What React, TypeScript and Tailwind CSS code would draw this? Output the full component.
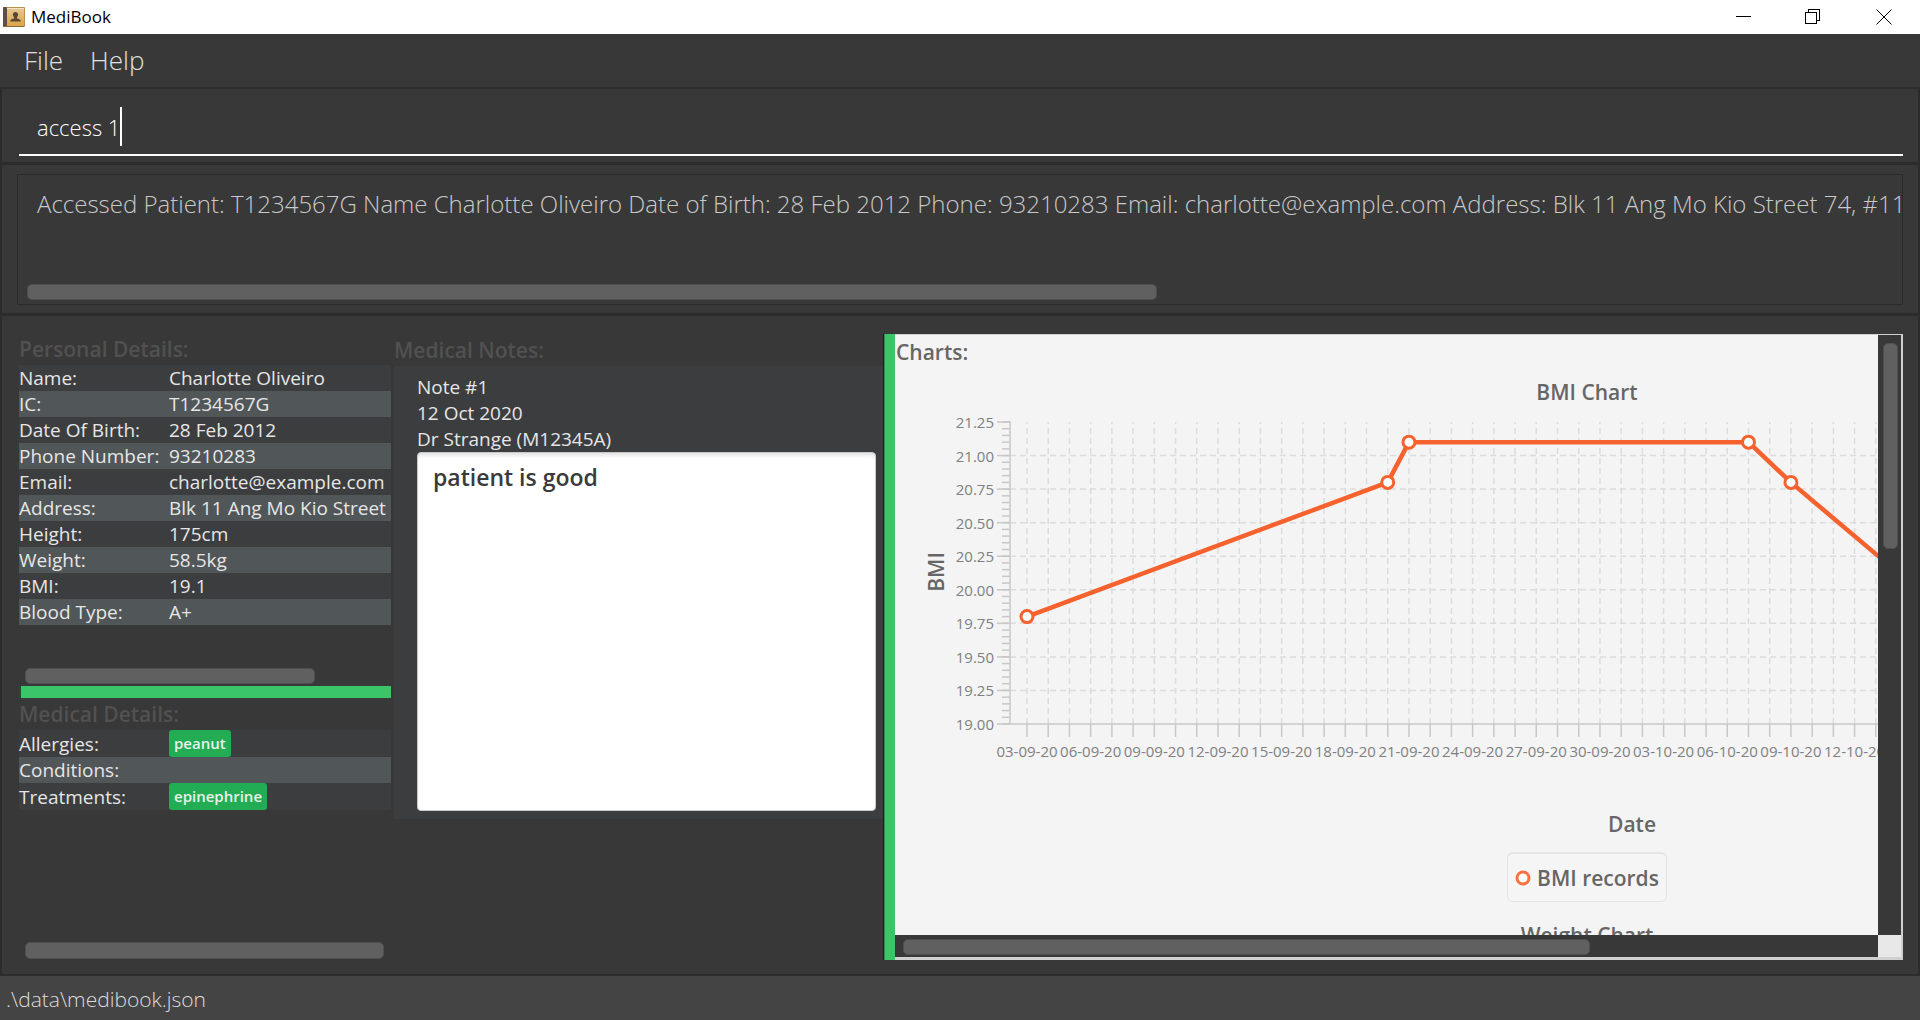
import React from "react";

const personalDetails: [string, string][] = [
  ["Name:", "Charlotte Oliveiro"],
  ["IC:", "T1234567G"],
  ["Date Of Birth:", "28 Feb 2012"],
  ["Phone Number:", "93210283"],
  ["Email:", "charlotte@example.com"],
  ["Address:", "Blk 11 Ang Mo Kio Street 74, #11-04"],
  ["Height:", "175cm"],
  ["Weight:", "58.5kg"],
  ["BMI:", "19.1"],
  ["Blood Type:", "A+"],
];

const medicalDetails: [string, string[]][] = [
  ["Allergies:", ["peanut"]],
  ["Conditions:", []],
  ["Treatments:", ["epinephrine"]],
];

const resultText =
  "Accessed Patient: T1234567G Name Charlotte Oliveiro Date of Birth: 28 Feb 2012 Phone: 93210283 Email: charlotte@example.com Address: Blk 11 Ang Mo Kio Street 74, #11-04";

/* BMI chart geometry, relative to the chart drawing */
const AXIS_X = 115;
const TOP = 21;
const BOTTOM = 323;
const FIRST_TICK = 132;
const DAY = 21.22;
const PLOT_RIGHT = 1360;

const yOf = (bmi: number) => TOP + ((21.25 - bmi) / 2.25) * (BOTTOM - TOP);
const xOf = (day: number) => FIRST_TICK + day * DAY;

const majorTicks = Array.from({ length: 10 }, (_, i) => 21.25 - i * 0.25);
const minorTicks = Array.from({ length: 46 }, (_, i) => 21.25 - i * 0.05);
const days = Array.from({ length: 58 }, (_, i) => i);
const dateLabels = [
  "03-09-20", "06-09-20", "09-09-20", "12-09-20", "15-09-20", "18-09-20", "21-09-20",
  "24-09-20", "27-09-20", "30-09-20", "03-10-20", "06-10-20", "09-10-20", "12-10-20",
];
const records: [number, number][] = [
  [0, 19.8],
  [17, 20.8],
  [18, 21.1],
  [34, 21.1],
  [36, 20.8],
  [45, 19.6],
];

function AppIcon() {
  return (
    <svg width="22" height="21" viewBox="0 0 22 21" aria-hidden="true">
      <defs>
        <linearGradient id="cover" x1="0" y1="0" x2="0" y2="1">
          <stop offset="0" stopColor="#e6c68c" />
          <stop offset="1" stopColor="#dba548" />
        </linearGradient>
      </defs>
      <rect x="0" y="0" width="22" height="20" rx="1" fill="#b98f4c" />
      <rect x="4" y="2" width="17" height="17" fill="url(#cover)" />
      <rect x="4" y="1" width="17" height="1" fill="#efe3c8" />
      <rect x="0" y="0" width="4" height="20" rx="1" fill="#5f4f4c" />
      <rect x="1" y="19" width="20" height="1" fill="#8b6d3b" />
      <path
        d="M12.500 5c1.600 0 2.600 1.100 2.600 2.600 0 1.200-.6 2.200-1.200 2.800v1.200c1.600.4 3.700.8 4 2.900H7.100c.3-2.100 2.400-2.500 4-2.900v-1.200c-.6-.6-1.200-1.600-1.200-2.800C9.900 6.100 10.900 5 12.500 5z"
        fill="#5a4834"
      />
    </svg>
  );
}

function TitleBar() {
  return (
    <header className="flex h-[34px] items-center justify-between bg-white pl-[3px] text-black">
      <div className="flex items-center gap-[6px]">
        <AppIcon />
        <h1 className="text-[17px] leading-5">MediBook</h1>
      </div>
      <div className="flex h-full">
        <button type="button" aria-label="Minimize" className="flex w-[70px] items-center justify-center">
          <svg width="16" height="16" viewBox="0 0 16 16" stroke="black" fill="none" shapeRendering="crispEdges">
            <path d="M1 7.500h15" />
          </svg>
        </button>
        <button type="button" aria-label="Restore" className="flex w-[70px] items-center justify-center">
          <svg width="16" height="16" viewBox="0 0 16 16" stroke="black" fill="none" shapeRendering="crispEdges">
            <path d="M.5 3.500h11v11H.5zM3.500 3.500v-3h11v11h-3" />
          </svg>
        </button>
        <button type="button" aria-label="Close" className="flex w-[72px] items-center justify-center">
          <svg width="16" height="16" viewBox="0 0 16 16" stroke="black" fill="none">
            <path d="M.5.500l15 15M15.500.500l-15 15" />
          </svg>
        </button>
      </div>
    </header>
  );
}

function Thumb({ className }: { className: string }) {
  return <div className={`rounded-[5px] border border-[#4f4f4f] bg-[#606060] ${className}`} />;
}

function PersonalDetails() {
  return (
    <section className="flex h-[352px] flex-col">
      <h2 className="h-[31px] text-[21px] leading-[31px] font-semibold text-[#515151]">Personal Details:</h2>
      <table className="w-full table-fixed border-collapse">
        <tbody>
          {personalDetails.map(([label, value]) => (
            <tr key={label} className="h-[26px] bg-[#3c3d3f] even:bg-[#515658]">
              <th scope="row" className="w-[150px] p-0 text-left font-normal whitespace-nowrap">{label}</th>
              <td className="overflow-hidden p-0 whitespace-nowrap">{value}</td>
            </tr>
          ))}
        </tbody>
      </table>
      <Thumb className="mt-auto mb-[2px] ml-[6px] h-[16px] w-[78%]" />
    </section>
  );
}

function MedicalDetails() {
  return (
    <section className="flex flex-1 flex-col">
      <h2 className="h-8 text-[21px] leading-8 font-semibold text-[#515151]">Medical Details:</h2>
      <table className="w-full table-fixed border-collapse">
        <tbody>
          {medicalDetails.map(([label, tags]) => (
            <tr key={label} className="h-[26px] bg-[#3c3d3f] even:bg-[#515658]">
              <th scope="row" className="w-[150px] p-0 text-left font-normal whitespace-nowrap">{label}</th>
              <td className="p-0">
                {tags.map((tag) => (
                  <span
                    key={tag}
                    className="block w-fit rounded-[3px] bg-[#22ad55] px-[5px] text-[15px] leading-[27px] font-semibold text-[#e8f3ec]"
                  >
                    {tag}
                  </span>
                ))}
              </td>
            </tr>
          ))}
        </tbody>
      </table>
      <Thumb className="mt-auto mb-px ml-[6px] h-[17px] w-[96.5%]" />
    </section>
  );
}

function MedicalNotes() {
  return (
    <section className="min-w-0 pl-[3px]">
      <h2 className="h-8 text-[21px] leading-8 font-semibold text-[#515151]">Medical Notes:</h2>
      <article className="flex flex-col bg-[#3c3d3f] pt-2 pr-[7px] pb-2 pl-[23px] leading-[26px]">
        <h3>Note #1</h3>
        <p>12 Oct 2020</p>
        <p>Dr Strange (M12345A)</p>
        <textarea
          aria-label="Note text"
          readOnly
          value="patient is good"
          className="block h-[359px] w-full resize-none rounded-[4px] border border-[#c8cacb] bg-white px-[15px] py-2 text-[23px] leading-8 font-semibold text-[#3a3a3a] shadow-[inset_0_4px_4px_-2px_#ddd] outline-none"
        />
      </article>
    </section>
  );
}

function BmiChart() {
  return (
    <svg width="1384" height="370" role="img" aria-label="BMI by date" className="block shrink-0">
      <g stroke="#dcdcdc" strokeWidth="1.500" strokeDasharray="6 4" fill="none">
        {days.map((d) => (
          <path key={d} d={`M${xOf(d)} ${BOTTOM}V${TOP}`} />
        ))}
        {majorTicks.slice(1, 9).map((v) => (
          <path key={v} d={`M${AXIS_X} ${yOf(v)}H${PLOT_RIGHT}`} />
        ))}
      </g>
      <g stroke="#c8c8c8" strokeWidth="1.500" fill="none">
        <path d={`M${AXIS_X} ${TOP - 1}V${BOTTOM}H${PLOT_RIGHT}`} />
        {majorTicks.map((v) => (
          <path key={v} d={`M${AXIS_X - 13} ${yOf(v)}h13`} />
        ))}
        {minorTicks.map((v) => (
          <path key={v} d={`M${AXIS_X - 8} ${yOf(v)}h8`} />
        ))}
        {days.map((d) => (
          <path key={d} d={`M${xOf(d)} ${BOTTOM}v13`} />
        ))}
      </g>
      <g fill="#808080" fontSize="15" fontWeight="400">
        {majorTicks.map((v) => (
          <text key={v} x="99" y={yOf(v) + 6} textAnchor="end">{v.toFixed(2)}</text>
        ))}
        {dateLabels.map((label, i) => (
          <text key={label} x={xOf(i * 3)} y="356" textAnchor="middle">{label}</text>
        ))}
      </g>
      <text transform="translate(49 171) rotate(-90)" textAnchor="middle" fontSize="21" fontWeight="600" fill="#666">BMI</text>
      <polyline
        points={records.map(([d, v]) => `${xOf(d)},${yOf(v)}`).join(" ")}
        fill="none"
        stroke="#f6622e"
        strokeWidth="4.500"
        strokeLinejoin="round"
      />
      {records.map(([d, v]) => (
        <circle key={d} cx={xOf(d)} cy={yOf(v)} r="6" fill="white" stroke="#f6622e" strokeWidth="3" />
      ))}
    </svg>
  );
}

function Charts() {
  return (
    <section className="flex min-w-0 border-l border-[#1e1e1e]">
      <div className="w-[11px] shrink-0 border-l border-[#2e8b50] bg-[#3ac569]" />
      <div className="grid min-w-0 flex-1 grid-cols-[minmax(0,1fr)_23px] grid-rows-[minmax(0,1fr)_22px] border-t border-r-2 border-b-[3px] border-[#d0d0d0] bg-[#e8e8e8]">
        <div className="h-[600px] overflow-hidden bg-[#f4f4f4] text-[#666]">
          <div className="flex w-[1384px] flex-col text-[21px] font-semibold">
            <h2 className="h-9 pl-px leading-[34px]">Charts:</h2>
            <h3 className="h-[30px] text-center leading-[42px]">BMI Chart</h3>
            <BmiChart />
            <p className="mt-9 pl-[90px] text-center leading-[34px]">Date</p>
            <p className="mt-[11px] flex h-[50px] items-center gap-[6px] self-center rounded-[6px] border border-t-2 border-[#e4e4e4] bg-[#f5f5f5] px-[7px]">
              <svg width="16" height="16" viewBox="0 0 16 16" aria-hidden="true">
                <circle cx="8" cy="8" r="6" fill="white" stroke="#f97342" strokeWidth="3" />
              </svg>
              BMI records
            </p>
            <h3 className="mt-4 text-center leading-[34px]">Weight Chart</h3>
          </div>
        </div>
        <div className="bg-[#383838] pt-[8px] pl-[5px]">
          <Thumb className="h-[206px] w-[15px]" />
        </div>
        <div className="bg-[#383838] pt-[4px] pl-[8px]">
          <Thumb className="h-[16px] w-[70.5%]" />
        </div>
      </div>
    </section>
  );
}

export default function App() {
  return (
    <div className="flex min-h-screen flex-col bg-[#383838] font-['Open_Sans','Noto_Sans',sans-serif] text-[19px] leading-[26px] text-[#e6e6e6]">
      <TitleBar />
      <nav className="flex h-[53px] items-center gap-[27px] px-6 pb-[2px] text-[26px] leading-8 font-light text-[#e0e0e0]">
        <button type="button">File</button>
        <button type="button">Help</button>
      </nav>
      <div className="border-2 border-[#2c2c2c] pt-[15px] pr-[15px] pb-[6px] pl-[17px]">
        <label className="flex h-[52px] items-center border-b-2 border-white pb-[5px] pl-[18px]">
          <input
            type="text"
            aria-label="Command"
            defaultValue="access 1"
            className="field-sizing-content bg-transparent p-0 text-[22px] leading-8 font-light text-white outline-none"
          />
          <span aria-hidden="true" className="h-[39px] w-[2px] bg-white" />
        </label>
      </div>
      <div className="border-2 border-t border-[#2c2c2c] px-[15px] pt-[9px] pb-2">
        <div className="flex h-[131px] flex-col border border-[#2a2a2a]">
          <textarea
            aria-label="Result"
            readOnly
            wrap="off"
            value={resultText}
            className="h-[62px] resize-none overflow-hidden bg-transparent py-[13px] pl-[19px] text-[24px] leading-8 font-light text-[#c9c9c9] outline-none"
          />
          <Thumb className="mt-auto mb-1 ml-[9px] h-[16px] w-[60%]" />
        </div>
      </div>
      <main className="grid flex-1 grid-cols-[372fr_492fr_1020fr] border-2 border-t border-[#2c2c2c] pt-[18px] pr-[15px] pb-[14px] pl-[17px]">
        <div className="flex min-w-0 flex-col">
          <PersonalDetails />
          <div className="h-3 border-l-2 border-[#1f4d30] bg-[#3ac569]" />
          <MedicalDetails />
        </div>
        <MedicalNotes />
        <Charts />
      </main>
      <footer className="flex h-[44px] items-center bg-[#444] px-[6px] pt-[2px] text-[21px] leading-8 font-light text-[#dcdcdc]">
        .\data\medibook.json
      </footer>
    </div>
  );
}
